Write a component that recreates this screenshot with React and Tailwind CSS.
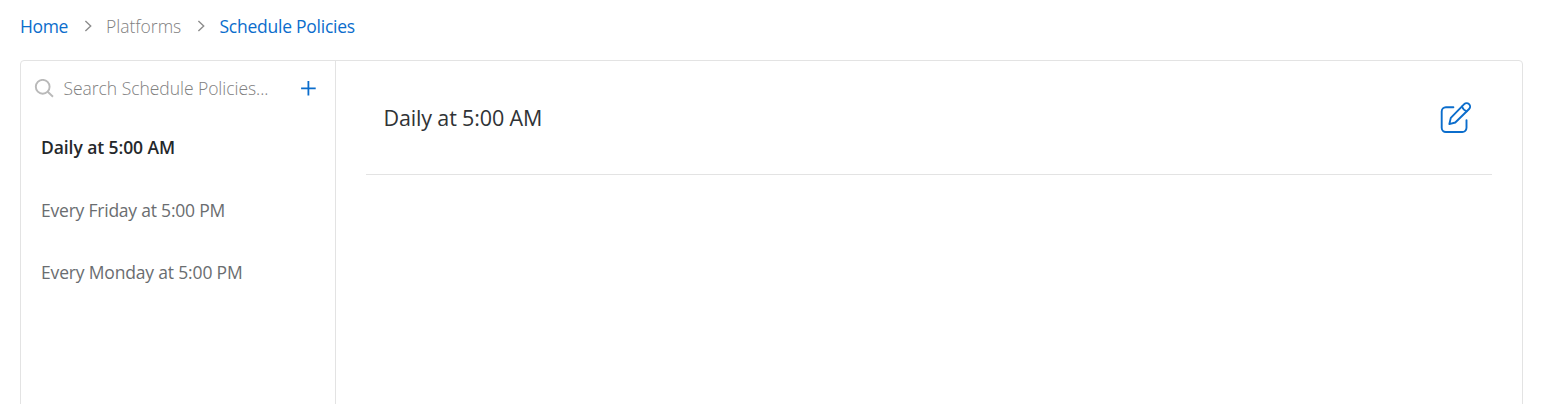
const policies = [
  { name: "Every Friday at 5:00 PM", style: "pt-px tracking-[-0.22px]" },
  { name: "Every Monday at 5:00 PM", style: "tracking-[-0.17px]" },
];

function Chevron() {
  return (
    <svg className="h-3 w-2 shrink-0" viewBox="0 0 8 12" fill="none" stroke="#8c8c8c" strokeWidth="1.4">
      <path d="M1.4 1l5.3 5L1.4 11" />
    </svg>
  );
}

function SearchIcon() {
  return (
    <svg className="h-5 w-5 shrink-0" viewBox="0 0 20 20" fill="none" stroke="#b9b9b9" strokeWidth="1.9">
      <circle cx="8.7" cy="7.8" r="6.9" />
      <path d="M13.7 12.8l5.3 5" />
    </svg>
  );
}

function PlusIcon() {
  return (
    <svg className="h-4 w-4 shrink-0" viewBox="0 0 16 16" fill="none" stroke="#0b6dcc" strokeWidth="1.8">
      <path d="M8.4 0v14.6M1.1 7.3h14.6" />
    </svg>
  );
}

function EditIcon() {
  return (
    <svg className="mb-[2px] h-8 w-8" viewBox="0 0 32 32" fill="none" stroke="#0b6dcc" strokeWidth="1.9" strokeLinecap="round" strokeLinejoin="round">
      <path d="M14.4 6.3H6.9A4.2 4.2 0 0 0 2.7 10.5V26.8A4.2 4.2 0 0 0 6.9 31H23.2A4.2 4.2 0 0 0 27.5 26.8V19.1" />
      <path d="M10.3 23.1L11.8 16.9L25.2 3.2A3.35 3.35 0 0 1 30.1 8L16.3 21.5Z" />
      <path d="M22.9 5.5C24.1 8.3 25.3 9.6 27.7 10.3" />
    </svg>
  );
}

export default function App() {
  return (
    <div className="flex h-[404px] w-[1552px] flex-col overflow-hidden bg-white pl-5 font-['Open_Sans',sans-serif] text-[17.5px]">
      <nav className="flex h-[60px] shrink-0 items-start pt-[14px] leading-6 whitespace-nowrap">
        <a className="w-[64px] tracking-[-0.4px] text-[#0b6dcc]">Home</a>
        <span className="flex h-6 w-[22px] items-center"><Chevron /></span>
        <span className="w-[91px] font-light tracking-[0px] text-[#808080]">Platforms</span>
        <span className="flex h-6 w-[22px] items-center"><Chevron /></span>
        <a className="pl-[0.5px] tracking-[-0.25px] text-[#0b6dcc]">Schedule Policies</a>
      </nav>
      <main className="flex h-[360px] w-[1503px] shrink-0 rounded border border-[#e3e3e3]">
        <aside className="w-[315px] shrink-0 border-r border-[#e3e3e3] whitespace-nowrap">
          <div className="flex h-[55px] items-center pl-[13px]">
            <SearchIcon />
            <span className="ml-[9.5px] w-[236.5px] font-light tracking-[-0.04px] text-[#808080]">Search Schedule Policies...</span>
            <PlusIcon />
          </div>
          <div className="flex h-[62px] items-center pl-5 font-semibold tracking-[-0.08px] text-[#25282b]">
            <span>Daily at 5:00 AM</span>
          </div>
          {policies.map((policy) => (
            <div key={policy.name} className="flex h-[62.5px] items-center pl-5 text-[#6a6d70]">
              <span className={policy.style}>{policy.name}</span>
            </div>
          ))}
        </aside>
        <section className="flex-1 px-[30px]">
          <header className="flex h-[114px] items-center justify-between border-b border-[#e3e3e3] pr-[21px] pl-[17.5px]">
            <h1 className="pt-[2px] text-[21.5px] tracking-[-0.15px] text-[#303336]">Daily at 5:00 AM</h1>
            <EditIcon />
          </header>
        </section>
      </main>
    </div>
  );
}
